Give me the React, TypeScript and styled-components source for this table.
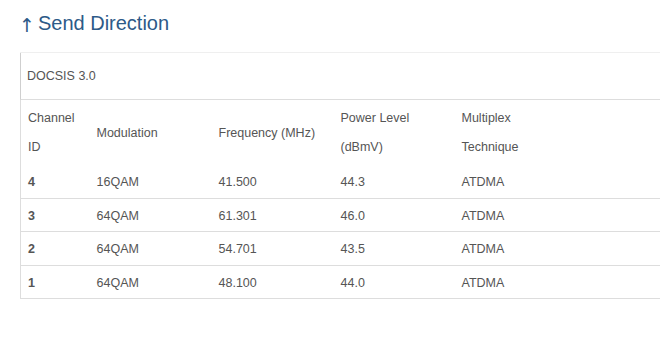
import React from 'react';
import styled, { createGlobalStyle } from 'styled-components';

const GlobalStyle = createGlobalStyle`
  html, body {
    margin: 0;
    padding: 0;
    background: #ffffff;
    overflow: hidden;
  }
  body {
    font-family: 'Liberation Sans', Arial, sans-serif;
  }
`;

const Page = styled.div`
  padding: 12px 0 0 20px;
`;

const Title = styled.h2`
  margin: 0 0 17px;
  font-size: 20px;
  font-weight: normal;
  line-height: 23px;
  color: #2d5a88;
  display: flex;
  align-items: baseline;
`;

const Arrow = styled.span`
  font-family: 'DejaVu Sans', sans-serif;
  font-size: 19px;
  position: relative;
  top: 2px;
  margin-left: -1px;
  margin-right: 3px;
`;

const Panel = styled.section`
  border-top: 1px solid #efefef;
`;

const PanelHeader = styled.div`
  border-left: 1px solid #cfcfcf;
  border-bottom: 1px solid #dddddd;
  padding: 0 6px;
  height: 46px;
  display: flex;
  align-items: center;
  font-size: 12.5px;
  color: #555555;
`;

const Table = styled.table`
  border-collapse: collapse;
  table-layout: fixed;
  width: 100%;
  border-left: 1px solid #dddddd;
  font-size: 12.5px;
  color: #555555;
`;

const HeadCell = styled.th`
  text-align: left;
  font-weight: normal;
  line-height: 29px;
  padding: 4px 7px 3px;
  vertical-align: middle;
`;

const Row = styled.tr`
  border-bottom: 1px solid #dddddd;
`;

const Cell = styled.td<{ $bold?: boolean }>`
  padding: 9px 7px 6.5px;
  line-height: 17px;
  font-weight: ${p => (p.$bold ? 'bold' : 'normal')};
`;

const channels = [
  { id: '4', mod: '16QAM', freq: '41.500', power: '44.3', mux: 'ATDMA' },
  { id: '3', mod: '64QAM', freq: '61.301', power: '46.0', mux: 'ATDMA' },
  { id: '2', mod: '64QAM', freq: '54.701', power: '43.5', mux: 'ATDMA' },
  { id: '1', mod: '64QAM', freq: '48.100', power: '44.0', mux: 'ATDMA' },
];

export default function App() {
  return (
    <>
      <GlobalStyle />
      <Page>
        <Title>
          <Arrow>↑</Arrow>
          Send Direction
        </Title>
        <Panel>
          <PanelHeader>DOCSIS 3.0</PanelHeader>
          <Table>
            <colgroup>
              <col style={{ width: 69 }} />
              <col style={{ width: 122 }} />
              <col style={{ width: 122 }} />
              <col style={{ width: 121 }} />
              <col />
            </colgroup>
            <thead>
              <tr>
                <HeadCell>Channel<br />ID</HeadCell>
                <HeadCell>Modulation</HeadCell>
                <HeadCell>Frequency (MHz)</HeadCell>
                <HeadCell>Power Level<br />(dBmV)</HeadCell>
                <HeadCell>Multiplex<br />Technique</HeadCell>
              </tr>
            </thead>
            <tbody>
              {channels.map(c => (
                <Row key={c.id}>
                  <Cell $bold>{c.id}</Cell>
                  <Cell>{c.mod}</Cell>
                  <Cell>{c.freq}</Cell>
                  <Cell>{c.power}</Cell>
                  <Cell>{c.mux}</Cell>
                </Row>
              ))}
            </tbody>
          </Table>
        </Panel>
      </Page>
    </>
  );
}
